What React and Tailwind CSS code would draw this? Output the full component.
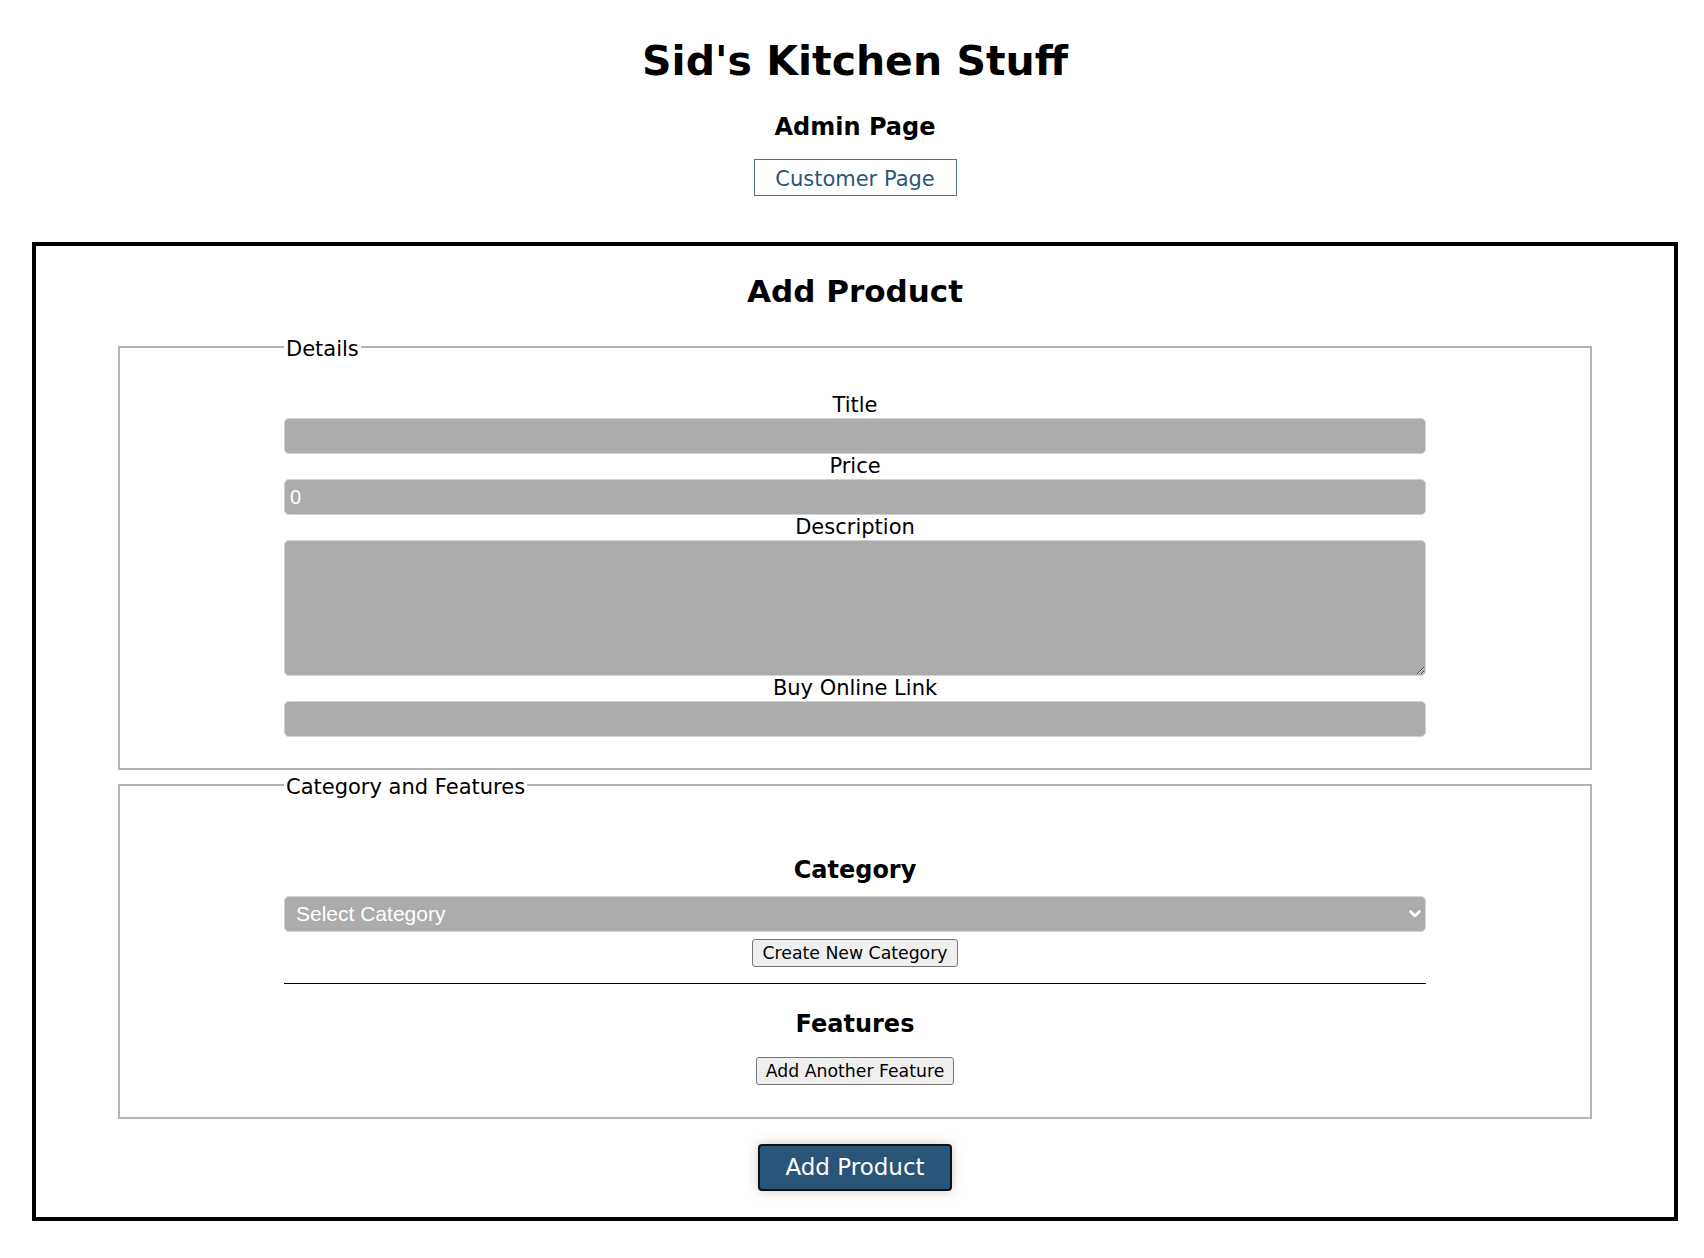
import React from 'react';

const Label = ({ children }) => (
  <label className="block text-center text-[21px] leading-[25px] text-black">
    {children}
  </label>
);

const fieldCls =
  "block w-full h-[36px] rounded-[5px] border border-[#d2d2d2] bg-[#acacac] px-[5px] text-[20px] text-white font-['Liberation_Sans',Arial,sans-serif] outline-none";

const greyBtn =
  'h-[28px] px-[9px] rounded-[3px] border border-[#767676] bg-[#efefef] text-[17.3px] leading-[20px] text-black';

const Fieldset = ({ legend, children, className = '' }) => (
  <fieldset
    className={`mx-auto w-[1474px] border-2 border-[#b4b4b4] px-[164px] ${className}`}
  >
    <legend className="px-[2px] pt-[5px] text-[21px] leading-[24px] text-black">{legend}</legend>
    {children}
  </fieldset>
);

const App = () => {
  return (
    <div className="min-h-screen bg-white pl-[6px] pt-[37px] pb-[38px] text-black font-['DejaVu_Sans',Verdana,sans-serif]">
      {/* Header */}
      <h1 className="text-center text-[41px] leading-[48px] font-bold">Sid's Kitchen Stuff</h1>
      <h3 className="mt-[28px] text-center text-[24px] leading-[28px] font-bold">Admin Page</h3>
      <div className="mt-[18px] flex justify-center">
        <button className="flex h-[37px] w-[203px] items-center justify-center border border-[#4a7096] bg-white pt-[3px] text-[21px] leading-[23px] text-[#2a5779]">
          Customer Page
        </button>
      </div>

      {/* Form box */}
      <div className="mx-[26px] mt-[46px] border-[4px] border-black pt-[28px] pb-[26px]">
        <h2 className="text-center text-[31px] leading-[35px] font-bold">Add Product</h2>

        <Fieldset legend="Details" className="mt-[23px]">
          <div className="pt-[32px] pb-[31px]">
            <Label>Title</Label>
            <input type="text" className={fieldCls} />
            <Label>Price</Label>
            <input type="text" defaultValue="0" className={`${fieldCls} h-[35px]`} />
            <Label>Description</Label>
            <textarea className="block h-[136px] w-full rounded-[5px] border border-[#d2d2d2] bg-[#acacac] px-[5px] text-[20px] text-white font-['Liberation_Sans',Arial,sans-serif] outline-none" />
            <Label>Buy Online Link</Label>
            <input type="text" className={fieldCls} />
          </div>
        </Fieldset>

        <Fieldset legend="Category and Features">
          <div className="pt-[57px] pb-[32px]">
            <h3 className="text-center text-[24px] leading-[28px] font-bold">Category</h3>
            <div className="relative mt-[12px]">
              <select className="block h-[36px] w-full appearance-none rounded-[5px] border border-[#d2d2d2] bg-[#acacac] pl-[11px] text-[21px] text-white font-['Liberation_Sans',Arial,sans-serif] outline-none">
                <option>Select Category</option>
              </select>
              <svg
                className="pointer-events-none absolute right-[5px] top-1/2 -translate-y-1/2"
                width="12"
                height="9"
                viewBox="0 0 12 9"
                fill="none"
              >
                <polyline points="1.5,2 6,6.5 10.5,2" stroke="white" strokeWidth="2.6" strokeLinecap="round" strokeLinejoin="round" />
              </svg>
            </div>
            <div className="mt-[7px] flex justify-center">
              <button className={greyBtn}>Create New Category</button>
            </div>
            <hr className="mt-[16px] border-t border-black" />
            <h3 className="mt-[26px] text-center text-[24px] leading-[28px] font-bold">Features</h3>
            <div className="mt-[19px] flex justify-center">
              <button className={greyBtn}>Add Another Feature</button>
            </div>
          </div>
        </Fieldset>

        <div className="mt-[25px] flex justify-center">
          <button className="h-[47px] w-[194px] rounded-[4px] border-2 border-[#111] bg-[#285578] text-[23px] leading-[27px] text-white shadow-[0_0_12px_rgba(0,0,0,0.22)]">
            Add Product
          </button>
        </div>
      </div>
    </div>
  );
};

export default App;
